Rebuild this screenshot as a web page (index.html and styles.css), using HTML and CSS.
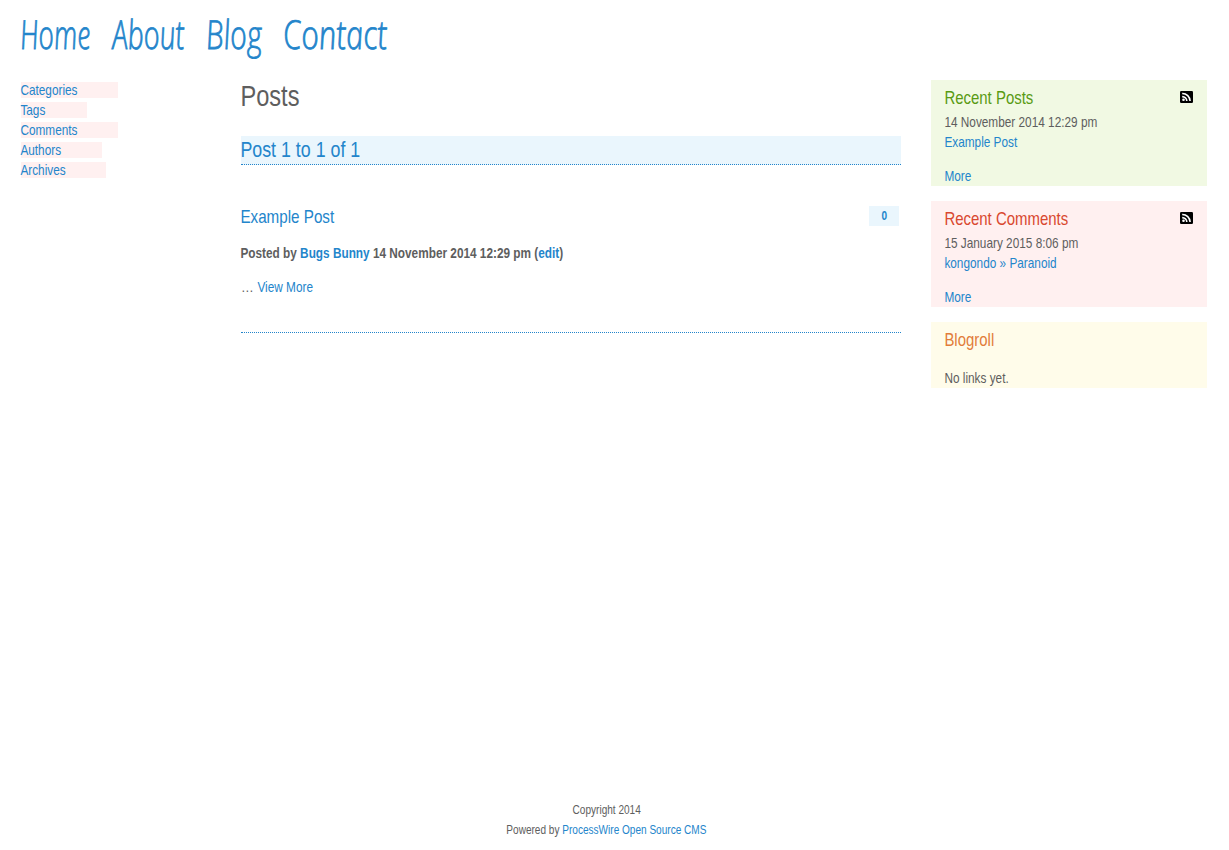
FILE: index.html
```html
<!DOCTYPE html>
<html lang="en">
<head>
<meta charset="utf-8">
<title>Posts</title>
<link rel="stylesheet" href="styles.css">
</head>
<body>
<svg class="defs" width="0" height="0" aria-hidden="true">
  <symbol id="rss" viewBox="0 0 13 12">
    <rect width="13" height="12" rx="1.2" fill="#000"/>
    <circle cx="3.5" cy="8.8" r="1.3" fill="#fff"/>
    <path d="M2.2 5.6a4.6 4.6 0 0 1 4.6 4.5M2.2 2.5a7.7 7.7 0 0 1 7.9 7.6" fill="none" stroke="#fff" stroke-width="1.6"/>
  </symbol>
</svg>
<nav class="topnav">
  <a class="home" href="#"><span>Home</span></a>
  <a class="about" href="#"><span>About</span></a>
  <a class="blog" href="#"><span>Blog</span></a>
  <a class="contact" href="#"><span>Contact</span></a>
</nav>
<div class="columns">
  <ul class="subnav">
    <li class="w97"><a class="t" href="#">Categories</a></li>
    <li class="w66"><a class="t" href="#">Tags</a></li>
    <li class="w97"><a class="t" href="#">Comments</a></li>
    <li class="w81"><a class="t" href="#">Authors</a></li>
    <li class="w85"><a class="t" href="#">Archives</a></li>
  </ul>
  <main class="content">
    <h1><span class="t">Posts</span></h1>
    <h2><span class="t wide">Post 1 to 1 of 1</span></h2>
    <article class="post">
      <div class="post-head">
        <h3><a class="t title" href="#">Example Post</a></h3>
        <a class="count" href="#"><span class="t mid">0</span></a>
      </div>
      <p class="byline"><span class="t">Posted by <a href="#">Bugs Bunny</a> 14 November 2014 12:29 pm (<a href="#">edit</a>)</span></p>
      <p class="excerpt"><span class="dots">…</span><a class="t" href="#">View More</a></p>
    </article>
  </main>
  <aside class="sidebar">
    <section class="box green">
      <h4><span class="t">Recent Posts</span><svg class="rss"><use href="#rss"/></svg></h4>
      <p><span class="t">14 November 2014 12:29 pm</span></p>
      <p><a class="t" href="#">Example Post</a></p>
      <p class="more"><a class="t" href="#">More</a></p>
    </section>
    <section class="box red">
      <h4><span class="t">Recent Comments</span><svg class="rss"><use href="#rss"/></svg></h4>
      <p><span class="t">15 January 2015 8:06 pm</span></p>
      <p><a class="t" href="#">kongondo » Paranoid</a></p>
      <p class="more"><a class="t" href="#">More</a></p>
    </section>
    <section class="box yellow">
      <h4><span class="t">Blogroll</span></h4>
      <p class="more"><span class="t">No links yet.</span></p>
    </section>
  </aside>
</div>
<footer class="footer">
  <p><span class="t mid">Copyright 2014</span></p>
  <p><span class="t mid">Powered by <a href="#">ProcessWire Open Source CMS</a></span></p>
</footer>
</body>
</html>
```
FILE: styles.css
```css
* { box-sizing: border-box; margin: 0; padding: 0; }
body {
  height: 850px;
  display: flex;
  flex-direction: column;
  background: #fff;
  color: #5e5e5e;
  font: 15px/20px "Liberation Sans", sans-serif;
  white-space: nowrap;
  overflow: hidden;
}
a { color: #2385cb; text-decoration: none; }
h1, h2, h3, h4 { font-weight: normal; }
ul { list-style: none; }
.defs { position: absolute; }

/* condensed lettering */
.t { display: inline-block; transform: translateX(-.6px) scaleX(.787); transform-origin: 0 50%; }
.t.wide { transform: translateX(-.6px) scaleX(.81); }
.t.title { transform: translateX(-.6px) scaleX(.8); }
.t.mid { transform: scaleX(.838); transform-origin: 50% 50%; }

.topnav { display: flex; gap: 22px; height: 80px; padding: 9px 0 0 21px; font: italic 300 40px/50px "Open Sans", "Noto Sans", sans-serif; }
.topnav span { display: inline-block; transform-origin: 0 39px; -webkit-text-stroke: .8px #2385cb; }
.home { width: 70px; }
.about { width: 72px; }
.blog { width: 55px; }
.contact { width: 104px; }
.home span { transform: scaleX(.68) skewX(8deg); }
.about span { transform: scaleX(.705) skewX(8deg); }
.blog span { transform: scaleX(.735) skewX(8deg); }
.contact span { transform: scaleX(.775) skewX(8deg); }
.columns { display: flex; flex: 1; padding-left: 21px; }
.subnav { width: 220px; }
.subnav li { height: 16px; margin: 2px 0 4px; line-height: 16px; background: #fff0f0; }
.subnav .w97 { width: 97px; }
.subnav .w66 { width: 66px; }
.subnav .w81 { width: 81px; }
.subnav .w85 { width: 85px; }
.content { width: 660px; }
h1 { font-size: 30px; line-height: 32px; }
h2 { height: 29px; margin-top: 24px; border-bottom: 1px dotted #2385cb; background: #eaf6fd; color: #2385cb; font-size: 22px; line-height: 27px; }
.post { height: 168px; padding-top: 41px; border-bottom: 1px dotted #2385cb; }
.post-head { display: flex; justify-content: space-between; padding-right: 2px; }
h3 { font-size: 19px; line-height: 22px; }
.count { width: 30px; height: 20px; background: #eaf6fd; text-align: center; font-size: 12px; font-weight: bold; line-height: 21px; }
.byline { margin-top: 15px; font-weight: bold; }
.excerpt { display: flex; gap: 3px; margin-top: 14px; }
.dots { width: 14px; transform: scaleX(.85); transform-origin: 0 50%; }
.sidebar { width: 276px; margin-left: 30px; }
.box { margin-bottom: 15px; padding: 7px 14px 0; }
h4 { display: flex; justify-content: space-between; height: 25px; font-size: 19px; line-height: 22px; }
.rss { width: 13px; height: 12px; margin-top: 4px; }
.more { padding-top: 14px; }
.green { height: 106px; background: #f1f9e3; }
.green h4 { color: #599b13; }
.red { height: 106px; background: #fff0f0; }
.red h4 { color: #d9482f; }
.yellow { height: 66px; background: #fffcea; }
.yellow h4 { color: #e27c3a; }
.footer { width: 1213px; height: 50px; text-align: center; font-size: 12px; }
```
